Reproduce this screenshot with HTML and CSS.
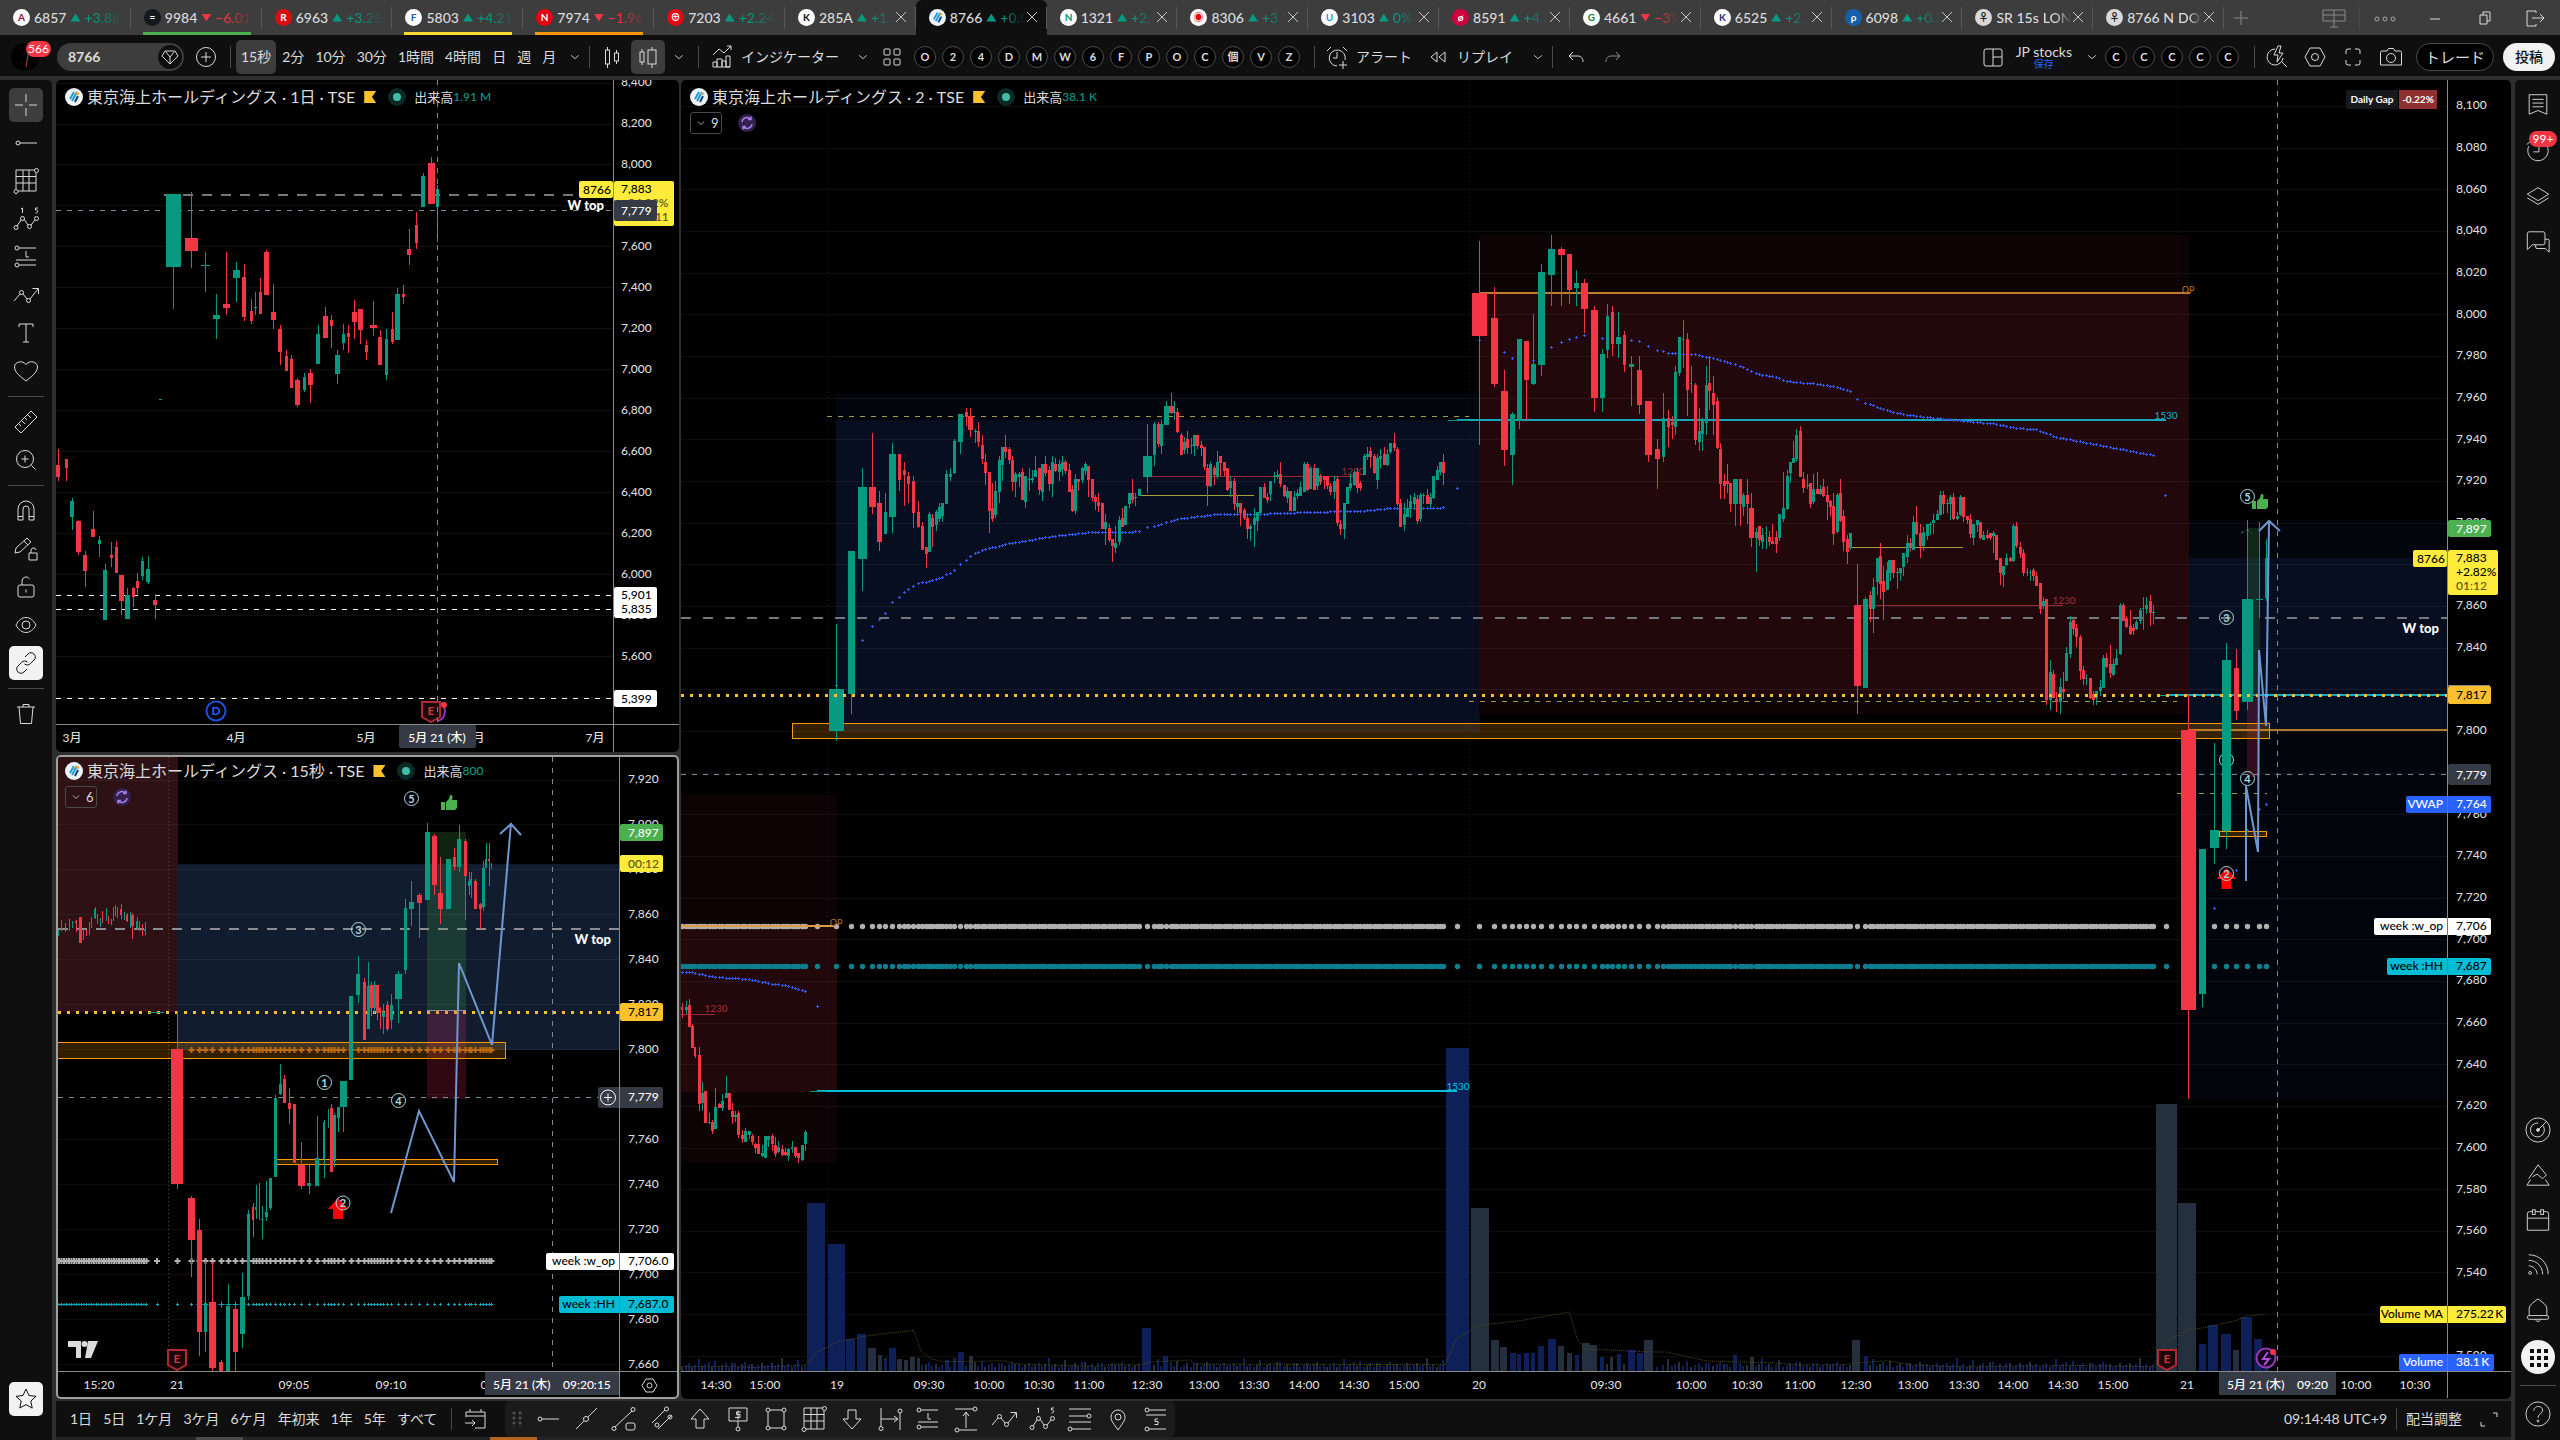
FILE: index.html
```html
<!DOCTYPE html>
<html lang="ja">
<head>
<meta charset="utf-8">
<title>8766 東京海上ホールディングス</title>
<link rel="stylesheet" href="styles.css">
</head>
<body>
<svg class="defs" aria-hidden="true">
  <symbol id="chev" viewBox="0 0 28 28"><path d="M9.500 12l4.500 4 4.500-4"/></symbol>
  <symbol id="cross" viewBox="0 0 28 28"><path d="M14 3v8M14 17v8M3 14h8M17 14h8"/></symbol>
  <symbol id="hline" viewBox="0 0 28 28"><circle cx="6" cy="14" r="2"/><path d="M8 14h17"/></symbol>
  <symbol id="fibgrid" viewBox="0 0 28 28"><path d="M4 3h19M4 3v19M4 9.500h20M4 16h20M6 24h18V6M11 3v21M17 3v21"/><circle cx="24.500" cy="3.500" r="2"/><circle cx="4" cy="24.500" r="2"/></symbol>
  <symbol id="wave" viewBox="0 0 28 28"><path d="M5 21l4-6M12 14l4 6M19 20l4-5"/><circle cx="4" cy="22.500" r="2"/><circle cx="10.500" cy="13.500" r="2"/><circle cx="17.500" cy="21.500" r="2"/><circle cx="24.500" cy="13.500" r="2"/><path d="M9 4l1.500-1v5M26 3h-2.500v2c3-.5 3 3 0 3"/></symbol>
  <symbol id="longpos" viewBox="0 0 28 28"><path d="M7 5h17M4 17h20M7 22h17M14 8v6h3"/><circle cx="5" cy="5" r="2"/><circle cx="5" cy="22" r="2"/></symbol>
  <symbol id="shortpos" viewBox="0 0 28 28"><path d="M7 5h17M4 10h20M7 24h17M16 14h-3v2.500h3v3h-3.500"/><circle cx="5" cy="5" r="2"/><circle cx="5" cy="24" r="2"/></symbol>
  <symbol id="trend" viewBox="0 0 28 28"><path d="M2 20l6-7M11 13l4 5M18 18l8-10M20.500 7.500H26.500V13"/><circle cx="9.500" cy="11.500" r="2"/><circle cx="16.500" cy="19.500" r="2"/></symbol>
  <symbol id="txt" viewBox="0 0 28 28"><path d="M7 8V5h14v3M14 5v18M11 23h6"/></symbol>
  <symbol id="heart" viewBox="0 0 28 28"><path d="M14 24C9 20 2.500 15.500 2.500 10c0-5 7.500-7.500 11.500-2.500C18 2.500 25.500 5 25.500 10c0 5.500-6.500 10-11.500 14z"/></symbol>
  <symbol id="ruler" viewBox="0 0 28 28"><path d="M3 19L19 3l6 6L9 25zM7 16l2 2M10 13l3 3M13 10l2 2M16 7l3 3"/></symbol>
  <symbol id="zoomin" viewBox="0 0 28 28"><circle cx="13" cy="13" r="8.500"/><path d="M19.500 19.500l4 4M13 9.500v7M9.500 13h7"/></symbol>
  <symbol id="magnet" viewBox="0 0 28 28"><path d="M6 23V12a8 8 0 0116 0v11h-5V12a3 3 0 00-6 0v11zM6 19.500h5M17 19.500h5"/></symbol>
  <symbol id="penlock" viewBox="0 0 28 28"><path d="M3 18l1-5L15 3l4 4L8 17zM12 6l4 4M17 18h8v7h-8zM19 18v-2a2.500 2.500 0 015-1"/></symbol>
  <symbol id="lock" viewBox="0 0 28 28"><rect x="6" y="12" width="16" height="12" rx="2"/><path d="M10 12V8a4 4 0 017.500-2M14 16.500v3"/></symbol>
  <symbol id="eye" viewBox="0 0 28 28"><path d="M4 14c5-10 15-10 20 0-5 10-15 10-20 0z"/><circle cx="14" cy="14" r="4"/></symbol>
  <symbol id="link" viewBox="0 0 28 28"><path d="M13 8l3-3c4-4 10 2 6 6l-3.500 3.500c-2 2-4 1.800-6 .5M15 20l-3 3c-4 4-10-2-6-6l3.500-3.500c2-2 4-1.800 6-.5"/></symbol>
  <symbol id="trash" viewBox="0 0 28 28"><path d="M5 7h18M11 7V4.500h6V7M7 7l1.500 16.500h11L21 7"/></symbol>
  <symbol id="star" viewBox="0 0 28 28"><path d="M14 4l3 6.500 7 .8-5.200 4.800 1.400 7L14 19.600 7.800 23l1.400-7L4 11.300l7-.8z"/></symbol>
  <symbol id="line2" viewBox="0 0 28 28"><path d="M4 24l8-8M16 12l9-9"/><circle cx="14" cy="14" r="2.500"/></symbol>
  <symbol id="rayrect" viewBox="0 0 28 28"><path d="M5 22L22 6"/><circle cx="4" cy="23.500" r="2"/><circle cx="23" cy="4.500" r="2"/><rect x="16" y="18" width="9" height="7" rx="2"/></symbol>
  <symbol id="channel" viewBox="0 0 28 28"><path d="M4 18L17 5M10 24L24 10"/><circle cx="18.500" cy="4" r="2"/><circle cx="9" cy="20" r="2"/><circle cx="22" cy="12" r="2"/></symbol>
  <symbol id="up" viewBox="0 0 28 28"><path d="M14 4l9 10h-5v9h-8v-9H5z"/></symbol>
  <symbol id="down" viewBox="0 0 28 28"><path d="M14 24l9-10h-5V5h-8v9H5z"/></symbol>
  <symbol id="pricenote" viewBox="0 0 28 28"><path d="M5 3h18v13H5zM14 16v6M17 7h-4.500v2.500H16v3h-5M14 5.500v9"/><circle cx="14" cy="24" r="2"/></symbol>
  <symbol id="rect" viewBox="0 0 28 28"><path d="M8 5h12M8 23h12M6 7v14M22 7v14"/><circle cx="6" cy="5" r="2"/><circle cx="22" cy="5" r="2"/><circle cx="6" cy="23" r="2"/><circle cx="22" cy="23" r="2"/></symbol>
  <symbol id="hrange" viewBox="0 0 28 28"><path d="M5 3v19M24 8v17M5 14h17M18 11l4 3-4 3"/><circle cx="5" cy="23.500" r="2"/><circle cx="24" cy="6" r="2"/></symbol>
  <symbol id="vrange" viewBox="0 0 28 28"><path d="M3 4h18M7 25h18M14 23V8M11 11l3-4 3 4"/><circle cx="23" cy="4" r="2"/><circle cx="5" cy="25" r="2"/></symbol>
  <symbol id="retr" viewBox="0 0 28 28"><path d="M3 4h22M3 11h18M3 17h22M6 24h19"/><circle cx="23" cy="11" r="2"/><circle cx="4" cy="24" r="2"/></symbol>
  <symbol id="pin" viewBox="0 0 28 28"><path d="M14 25c-4-6-7-9-7-13a7 7 0 0114 0c0 4-3 7-7 13z"/><circle cx="14" cy="12" r="3"/></symbol>
  <symbol id="candles" viewBox="0 0 28 28"><path d="M9.500 4v3M9.500 21v4M18.500 7v3M18.500 18v3"/><rect x="7.500" y="7" width="4" height="14"/><rect x="16.500" y="10" width="4" height="8"/></symbol>
  <symbol id="volcandles" viewBox="0 0 28 28"><path d="M8 6v3M8 19v3M18 4v3M18 21v4"/><rect x="6" y="9" width="4" height="10"/><rect x="14" y="7" width="8" height="14"/></symbol>
  <symbol id="indic" viewBox="0 0 28 28"><path d="M5 12l6-6 5 4 7-7M19 3h4v4M5 24v-5h4v5M9 24v-8h5v8M14 24v-6h4v6M18 24V13h4v11zM5 24h17"/></symbol>
  <symbol id="grid4" viewBox="0 0 28 28"><rect x="6" y="6" width="6" height="6" rx="1"/><rect x="16" y="6" width="6" height="6" rx="1"/><rect x="6" y="16" width="6" height="6" rx="1"/><rect x="16" y="16" width="6" height="6" rx="1"/></symbol>
  <symbol id="alarm" viewBox="0 0 28 28"><path d="M22 17a8 8 0 10-8 6M14 9v6h-4M4 8l4-4M20 4l4 4M20 18v8M16 22h8"/></symbol>
  <symbol id="replay" viewBox="0 0 28 28"><path d="M13 9v10l-6-5zM21 9v10l-6-5z"/></symbol>
  <symbol id="undo" viewBox="0 0 28 28"><path d="M11 9l-4 4 4 4M7 13h9c3 0 5 2 5 6"/></symbol>
  <symbol id="redo" viewBox="0 0 28 28"><path d="M17 9l4 4-4 4M21 13h-9c-3 0-5 2-5 6"/></symbol>
  <symbol id="layout" viewBox="0 0 28 28"><rect x="4" y="6" width="18" height="17" rx="2"/><path d="M13 6v17M13 14h9"/></symbol>
  <symbol id="bolt" viewBox="0 0 28 28"><path d="M12 6a8 8 0 108 9M19 19l5 5M15 3l-4 9h4l-1 7 6-9h-4l2-7z"/></symbol>
  <symbol id="hex" viewBox="0 0 28 28"><path d="M9 5h10l5 9-5 9H9l-5-9z"/><circle cx="14" cy="14" r="3.500"/></symbol>
  <symbol id="expand" viewBox="0 0 28 28"><path d="M7 11V8a2 2 0 012-2h3M16 6h3a2 2 0 012 2v3M21 17v3a2 2 0 01-2 2h-3M12 22H9a2 2 0 01-2-2v-3"/></symbol>
  <symbol id="camera" viewBox="0 0 28 28"><path d="M5 8h5l1.500-2.500h5L18 8h5a1.500 1.500 0 011.500 1.500V22H3.500V9.500A1.500 1.500 0 015 8z"/><circle cx="14" cy="15" r="4.500"/></symbol>
  <symbol id="gem" viewBox="0 0 28 28"><circle cx="14" cy="14" r="12" fill="#0f0f0f" stroke="none"/><path d="M9 8h10l3 5-8 8-8-8zM14 21v-7M10 9l4 5 4-5"/></symbol>
  <symbol id="plusc" viewBox="0 0 28 28"><circle cx="14" cy="14" r="9.500"/><path d="M14 9v10M9 14h10"/></symbol>
  <symbol id="calgo" viewBox="0 0 28 28"><path d="M5 12V7h19v16H14M5 11h19M9 4v3M20 4v3M4 18h10M11 15l3 3-3 3"/></symbol>
  <symbol id="corner" viewBox="0 0 28 28"><path d="M18 8h4v4M10 21H6v-4"/></symbol>
  <symbol id="list" viewBox="0 0 28 28"><path d="M4.500 4h19v21L14 21l-9.500 4zM8 9h12M8 13h12M8 17h12"/></symbol>
  <symbol id="clock" viewBox="0 0 28 28"><path d="M4 10a11 11 0 1020 0M15 9v7h-6M2 8l5-4"/></symbol>
  <symbol id="layers" viewBox="0 0 28 28"><path d="M2.500 12L14 5l11.500 7L14 19zM2.500 16L14 23l11.500-7"/></symbol>
  <symbol id="chat" viewBox="0 0 28 28"><path d="M2.500 5a2 2 0 012-2h15a2 2 0 012 2v10a2 2 0 01-2 2H8l-5.500 5zM21.500 11h3a1.500 1.500 0 011.500 1.500V25l-4-4H13a1.500 1.500 0 01-1.500-1.500V17"/></symbol>
  <symbol id="target" viewBox="0 0 28 28"><circle cx="14" cy="14" r="13"/><path d="M19 9a7.500 7.500 0 11-5-2.500M14 14l9-9"/><circle cx="14" cy="14" r="1.500" fill="#dbdbdb"/></symbol>
  <symbol id="idea" viewBox="0 0 28 28"><path d="M4 18L14 3l9 11-4 4-6-5-5 3M6 19l-4 6h24l-4-6"/></symbol>
  <symbol id="cal" viewBox="0 0 28 28"><path d="M5 5h3M11 5h6M20 5h3a2.500 2.500 0 012.500 2.500V25h-23V7.500A2.500 2.500 0 015 5M2.500 12h23"/><rect x="8" y="3" width="3" height="5"/><rect x="17" y="3" width="3" height="5"/></symbol>
  <symbol id="rss" viewBox="0 0 28 28"><path d="M4 3c12 0 21 9 21 21M4 9c9 0 15 7 15 15M4 15c5 0 9 4 9 9"/><circle cx="5.500" cy="22.500" r="1.500"/></symbol>
  <symbol id="bell" viewBox="0 0 28 28"><path d="M4.500 20V12C5 8 9 6 12 3.500 13 2 15 2 16 3.500 19 6 23 8 23.500 12v8M11 24c1 3 5 3 6 0"/><rect x="2.500" y="20" width="23" height="4" rx="2"/></symbol>
  <symbol id="help" viewBox="0 0 28 28"><circle cx="14" cy="14" r="13"/><path d="M9.500 10.500c0-6 9.500-6 9.500-.5 0 3.500-5 4-5 8"/><circle cx="14" cy="21.500" r="1"/></symbol>
  <symbol id="tokio" viewBox="0 0 18 18"><circle cx="9" cy="9" r="9" fill="#eef3fa" stroke="none"/><path d="M5 11l4-7M7 13l5-9" stroke="#1d9bd8" stroke-width="2"/><path d="M10 14l3-6" stroke="#123f7d" stroke-width="2"/><path d="M11 5l3 1" stroke="#f3a21b" stroke-width="2"/></symbol>
  <symbol id="sync" viewBox="0 0 20 20"><circle cx="10" cy="10" r="9" fill="#33214f" stroke="none"/><path d="M5 9a5 5 0 019-2.500M15 11a5 5 0 01-9 2.500M14 3.500v3h-3M6 16.500v-3h3" stroke="#a77be8" stroke-width="1.500"/></symbol>
</svg>

<header class="tabs">
  <nav class="tablist" id="tabs"></nav>
  <div class="win">
    <button class="ib" aria-label="追加"><svg class="ic dim"><path d="M14 7v14M7 14h14"/></svg></button>
    <span class="grow"></span>
    <button class="ib wide" aria-label="表示"><svg class="ic dim"><path d="M3 6h22v11H3zM14 6v17M10 23h8M3 11h22"/></svg></button>
    <span class="vs"></span>
    <button class="ib wide" aria-label="メニュー"><svg class="ic more"><circle cx="6" cy="15" r="2"/><circle cx="14" cy="15" r="2"/><circle cx="22" cy="15" r="2"/></svg></button>
    <button class="ib wide" aria-label="最小化"><svg class="ic"><path d="M9 15h10"/></svg></button>
    <button class="ib wide" aria-label="元に戻す"><svg class="ic"><path d="M9 11h7v9H9zM12 11V8h7v9h-3"/></svg></button>
    <button class="ib wide" aria-label="閉じる"><svg class="ic"><path d="M15 9V7H6v15h9v-2M11 14h12M19 10l4 4-4 4"/></svg></button>
  </div>
</header>

<div class="topbar">
  <div class="g g-user">
    <button class="avatar" aria-label="ユーザー"><svg viewBox="0 0 28 28"><path d="M15 24l3-18" stroke="#b5442c"/></svg><span class="badge">566</span></button>
    <label class="search"><input value="8766" aria-label="シンボル"><svg class="ic"><use href="#gem"/></svg></label>
    <button class="ib" aria-label="比較"><svg class="ic"><use href="#plusc"/></svg></button>
  </div>
  <span class="vs"></span>
  <div class="g g-tf">
    <button class="tb on">15秒</button><button class="tb">2分</button><button class="tb">10分</button><button class="tb">30分</button><button class="tb">1時間</button><button class="tb">4時間</button><button class="tb">日</button><button class="tb">週</button><button class="tb">月</button>
    <span class="grow"></span><button class="cv" aria-label="時間足"><svg class="ic"><use href="#chev"/></svg></button>
  </div>
  <span class="vs"></span>
  <div class="g g-style">
    <button class="ib" aria-label="ローソク足"><svg class="ic"><use href="#candles"/></svg></button>
    <button class="ib on" aria-label="出来高ローソク足"><svg class="ic"><use href="#volcandles"/></svg></button>
    <button class="cv" aria-label="チャートの種類"><svg class="ic"><use href="#chev"/></svg></button>
  </div>
  <span class="vs"></span>
  <div class="g g-ind">
    <svg class="ic"><use href="#indic"/></svg><button class="tb">インジケーター</button>
    <span class="grow"></span><button class="cv" aria-label="お気に入り"><svg class="ic"><use href="#chev"/></svg></button>
    <button class="ib" aria-label="テンプレート"><svg class="ic"><use href="#grid4"/></svg></button>
  </div>
  <div class="g rounds"><button>O</button><button>2</button><button>4</button><button>D</button><button>M</button><button>W</button><button>6</button><button>F</button><button>P</button><button>O</button><button>C</button><button>個</button><button>V</button><button>Z</button></div>
  <span class="vs"></span>
  <div class="g g-alert">
    <svg class="ic"><use href="#alarm"/></svg><button class="tb">アラート</button>
    <span class="grow"></span>
    <svg class="ic"><use href="#replay"/></svg><button class="tb">リプレイ</button>
    <button class="cv" aria-label="リプレイ設定"><svg class="ic"><use href="#chev"/></svg></button>
  </div>
  <span class="vs"></span>
  <div class="g g-undo">
    <button class="ib" aria-label="元に戻す"><svg class="ic"><use href="#undo"/></svg></button>
    <button class="ib" aria-label="やり直す"><svg class="ic dim"><use href="#redo"/></svg></button>
  </div>
  <span class="grow"></span>
  <div class="g g-layout">
    <button class="ib" aria-label="レイアウト"><svg class="ic"><use href="#layout"/></svg></button>
    <button class="name"><span>JP stocks</span><small>保存</small></button>
    <button class="cv" aria-label="レイアウト管理"><svg class="ic"><use href="#chev"/></svg></button>
  </div>
  <div class="g rounds"><button>C</button><button>C</button><button>C</button><button>C</button><button>C</button></div>
  <span class="vs"></span>
  <div class="g g-tools">
    <button class="ib" aria-label="クイック検索"><svg class="ic"><use href="#bolt"/></svg></button>
    <button class="ib" aria-label="設定"><svg class="ic"><use href="#hex"/></svg></button>
    <button class="ib" aria-label="全画面"><svg class="ic"><use href="#expand"/></svg></button>
    <button class="ib" aria-label="スナップショット"><svg class="ic"><use href="#camera"/></svg></button>
  </div>
  <button class="pill">トレード</button>
  <button class="pill white">投稿</button>
</div>

<div class="work">
  <nav class="side left" id="left"></nav>
  <div class="center">
    <main class="charts">
      <div class="col">
        <section class="panel pa">
          <svg class="plot" id="day" viewBox="56 80 623 672" preserveAspectRatio="none"></svg>
          <div class="legend"><svg class="logo"><use href="#tokio"/></svg><h2>東京海上ホールディングス · 1日 · TSE</h2><i class="flag"></i><i class="live"></i><span>出来高</span><b>1.91 M</b></div>
        </section>
        <section class="panel pb">
          <svg class="plot" id="sec" viewBox="58 757 619 640" preserveAspectRatio="none"></svg>
          <div class="legend"><svg class="logo"><use href="#tokio"/></svg><h2>東京海上ホールディングス · 15秒 · TSE</h2><i class="flag"></i><i class="live"></i><span>出来高</span><b>800</b></div>
          <div class="legend row2"><button class="count"><svg class="ic"><use href="#chev"/></svg>6</button><svg class="sync"><use href="#sync"/></svg></div>
        </section>
      </div>
      <section class="panel pm">
        <svg class="plot" id="min" viewBox="681 80 1830 1319" preserveAspectRatio="none"></svg>
        <div class="legend"><svg class="logo"><use href="#tokio"/></svg><h2>東京海上ホールディングス · 2 · TSE</h2><i class="flag"></i><i class="live"></i><span>出来高</span><b>38.1 K</b></div>
        <div class="legend row2"><button class="count"><svg class="ic"><use href="#chev"/></svg>9</button><svg class="sync"><use href="#sync"/></svg></div>
      </section>
    </main>
    <footer class="bottom">
      <div class="ranges"><button>1日</button><button>5日</button><button>1ケ月</button><button>3ケ月</button><button>6ケ月</button><button>年初来</button><button>1年</button><button>5年</button><button>すべて</button></div>
      <span class="vs"></span>
      <button class="ib cal" aria-label="日付へ移動"><svg class="ic"><use href="#calgo"/></svg></button>
      <div class="fav" id="fav"></div>
      <span class="grow"></span>
      <button class="tb">09:14:48 UTC+9</button><span class="vs"></span><button class="tb adj">配当調整</button>
      <button class="ib" aria-label="最大化"><svg class="ic"><use href="#corner"/></svg></button>
    </footer>
    <div class="edge"><i></i><i class="or"></i></div>
  </div>
  <nav class="side right">
    <div class="stack">
      <button aria-label="ウォッチリスト"><svg class="ic"><use href="#list"/></svg></button>
      <button aria-label="アラート"><svg class="ic"><use href="#clock"/></svg><span class="badge">99+</span></button>
      <button aria-label="オブジェクト"><svg class="ic"><use href="#layers"/></svg></button>
      <button aria-label="チャット"><svg class="ic"><use href="#chat"/></svg></button>
    </div>
    <span class="grow"></span>
    <button aria-label="スクリーナー"><svg class="ic"><use href="#target"/></svg></button>
    <button aria-label="アイデア"><svg class="ic"><use href="#idea"/></svg></button>
    <button aria-label="カレンダー"><svg class="ic"><use href="#cal"/></svg></button>
    <button aria-label="ニュース"><svg class="ic"><use href="#rss"/></svg></button>
    <button aria-label="通知"><svg class="ic"><use href="#bell"/></svg></button>
    <button class="apps" aria-label="プロダクト"><svg class="ic"><path d="M5 5h4v4H5zM12 5h4v4h-4zM19 5h4v4h-4zM5 12h4v4H5zM12 12h4v4h-4zM19 12h4v4h-4zM5 19h4v4H5zM12 19h4v4h-4zM19 19h4v4h-4z"/></svg></button>
    <hr>
    <button aria-label="ヘルプ"><svg class="ic"><use href="#help"/></svg></button>
  </nav>
</div>
<script src="app.js"></script>
</body>
</html>
```

FILE: styles.css
```css
* { box-sizing: border-box; }
body {
  margin: 0;
  height: 100vh;
  display: flex;
  flex-direction: column;
  background: #2e2e2e;
  color: #dbdbdb;
  font: 14px/18px Lato, "Noto Sans CJK JP", sans-serif;
  overflow: hidden;
}
button { background: none; border: 0; padding: 0; color: inherit; font: inherit; white-space: nowrap; }
.defs { position: absolute; width: 0; height: 0; }
.ic { width: 28px; height: 28px; flex: none; display: block; fill: none; stroke: #dbdbdb; stroke-width: 1; }
.ic.dim { stroke: #8a8a8a; }
.ic.more { stroke: #a8a8a8; }
.grow { flex: 1; }
.vs { width: 1px; height: 22px; background: #4a4a4a; flex: none; }

.tabs { height: 35px; flex: none; display: flex; background: #3d3d3d; }
.tablist { flex: 1; display: flex; min-width: 0; }
.tab {
  flex: 1; min-width: 0; height: 35px; position: relative;
  display: flex; align-items: center; padding: 0 0 0 13px; gap: 4px;
  color: inherit; text-decoration: none; font-weight: 500; white-space: nowrap;
}
.tab::after { content: ""; position: absolute; right: 0; top: 7px; height: 22px; width: 1px; background: #575757; }
.tab.active { background: #0f0f0f; border-radius: 6px 6px 0 0; }
.tab .lg { width: 17px; height: 17px; flex: none; }
.tab .lg text { font-size: 10px; font-weight: 700; text-anchor: middle; }
.tab .nm { flex: none; font-size: 14px; }
.tab .rest { flex: 1; overflow: hidden; display: flex; gap: 4px; align-items: center; margin-right: 22px;
  -webkit-mask-image: linear-gradient(90deg, #000 45%, transparent 100%); mask-image: linear-gradient(90deg, #000 45%, transparent 100%); }
.tab.nox .rest { margin-right: 8px; }
.tab .up { color: #089981; }
.tab .dn { color: #f23645; }
.tri { width: 10px; height: 8px; flex: none; background: #089981; clip-path: polygon(50% 0, 100% 100%, 0 100%); }
.tri.d { background: #f23645; clip-path: polygon(0 0, 100% 0, 50% 100%); }
.tab .x { position: absolute; right: 8px; top: 10px; width: 14px; height: 14px; stroke: #c8c8c8; fill: none; }
.tab .bar { position: absolute; left: 12px; right: 11px; bottom: 0; height: 3px; }
.win { width: 336px; display: flex; align-items: center; }
.win .ib.wide { width: 50px; }

.ib { width: 34px; height: 34px; flex: none; display: grid; place-items: center; border-radius: 5px; }
.ib.on, .tb.on { background: #3d3d3d; }
.tb { height: 34px; padding: 0 5px; border-radius: 5px; }
.cv { width: 20px; height: 34px; display: grid; place-items: center; }
.cv .ic { width: 24px; height: 24px; }
.topbar { height: 41px; flex: none; display: flex; align-items: center; background: #0f0f0f; padding: 2px 5px 0 11px; }
.g { display: flex; align-items: center; }
.badge { position: absolute; background: #f23645; color: #fff; font-size: 12px; line-height: 16px; border-radius: 8px; padding: 0 4px; }
.avatar { position: relative; width: 28px; height: 28px; border-radius: 50%; background: #000; }
.avatar svg { fill: none; display: block; }
.avatar .badge { left: 15px; top: -2px; padding: 0 2px; }
.g-user { width: 219px; }
.search { margin-left: 18px; width: 127px; height: 28px; border-radius: 14px; background: #3d3d3d; display: flex; align-items: center; }
.search input { flex: 1; min-width: 0; background: none; border: 0; color: #dbdbdb; font: bold 14px Lato, sans-serif; padding: 0 0 0 11px; outline: 0; }
.search + .ib { margin-left: 5px; }
.g-tf { width: 358px; padding: 0 6px 0 5px; gap: 1px; }
.g-style { width: 108px; padding: 0 5px; gap: 2px; }
.g-ind { width: 210px; padding: 0 0 0 9px; }
.g-ind .ib { margin-left: 4px; }
.rounds { gap: 6px; }
.rounds button { width: 22px; height: 22px; border: 1px solid #4a4a4a; border-radius: 50%; background: #000; font-size: 11px; line-height: 11px; font-weight: 700; }
.g-ind + .rounds { margin: 0 14px 0 5px; }
.g-alert { width: 237px; padding: 0 6px 0 8px; }
.g-alert .cv { margin-left: 8px; }
.g-undo { padding: 0 6px; gap: 3px; }
.name { display: flex; flex-direction: column; align-items: center; line-height: 14px; padding: 0 8px 0 5px; }
.name small { color: #2962ff; font-size: 10px; line-height: 10px; }
.g-layout + .rounds { margin: 0 15px 0 5px; }
.g-tools { gap: 4px; padding: 0 5px; }
.pill { height: 28px; width: 78px; border: 1px solid #4a4a4a; border-radius: 14px; background: #000; font-size: 15px; margin-left: 3px; }
.pill.white { width: 52px; background: #f2f2f2; color: #0f0f0f; border: 0; margin-left: 9px; font-size: 14px; font-weight: 500; }

.work { flex: 1; min-height: 0; margin-top: 4px; display: flex; gap: 4px; }
.side { background: #0f0f0f; display: flex; flex-direction: column; align-items: center; }
.side button { position: relative; width: 34px; height: 34px; flex: none; display: grid; place-items: center; border-radius: 5px; }
.side hr { width: 36px; border: 0; border-top: 1px solid #4a4a4a; margin: 4px 0; }
.side.left { width: 52px; padding: 8px 0 24px; gap: 4px; border-radius: 0 5px 0 0; }
.side .sel { background: #3d3d3d; }
.side .inv { background: #f2f2f2; }
.side .inv .ic { stroke: #0f0f0f; }
.side.right { width: 45px; padding: 7px 0 9px; gap: 11px; border-radius: 5px 0 0 0; }
.stack { display: flex; flex-direction: column; gap: 12px; }
.side.right .ic { width: 26px; height: 26px; }
.side.right .badge { left: 8px; top: -2px; }
.side.right .apps { background: #f2f2f2; border-radius: 50%; margin-top: 2px; }
.side.right .apps .ic { fill: #0f0f0f; stroke: none; }
.side.right hr { margin: 0; }

.center { flex: 1; min-width: 0; display: flex; flex-direction: column; }
.charts { flex: 1; min-height: 0; display: grid; grid-template-columns: 623fr 1830fr; gap: 2px; }
.col { display: grid; grid-template-rows: 672fr 644fr; gap: 3px; min-height: 0; min-width: 0; }
.panel { position: relative; background: #000; overflow: hidden; border-radius: 5px; min-width: 0; min-height: 0; }
.pb { border: 2px solid #a0a0a0; }
.plot { width: 100%; height: 100%; display: block; font: 500 12px Lato, "Noto Sans CJK JP", sans-serif; }
.legend { position: absolute; left: 9px; top: 6px; display: flex; align-items: center; height: 22px; white-space: nowrap; }
.legend.row2 { top: 32px; gap: 15px; }
.pb .legend { left: 7px; top: 3px; }
.pb .legend.row2 { top: 29px; }
.logo { width: 18px; height: 18px; margin-right: 4px; fill: none; }
.legend h2 { margin: 0; font-size: 16px; line-height: 22px; font-weight: 400; }
.flag { width: 12px; height: 12px; margin: 0 12px 0 9px; background: #fbc02d; clip-path: polygon(0 0, 100% 0, 65% 50%, 100% 100%, 0 100%); }
.live { width: 18px; height: 18px; border-radius: 50%; background: #42bda8; border: 5px solid #0b2a26; margin-right: 8px; }
.legend span { font-size: 13px; }
.legend b { font-size: 12px; font-weight: 500; color: #089981; }
.count { height: 22px; width: 32px; border: 1px solid #4a4a4a; border-radius: 3px; display: flex; align-items: center; font-size: 13px; }
.count .ic { width: 20px; height: 20px; }
.sync { width: 20px; height: 20px; fill: none; }

.bottom { height: 38px; flex: none; display: flex; align-items: center; background: #0f0f0f; border-top: 2px solid #2e2e2e; padding: 0 5px 0 14px; }
.ranges { display: flex; gap: 11px; width: 377px; }
.cal { margin: 0 13px 0 2px; }
.fav { display: flex; align-self: stretch; align-items: center; gap: 4px; background: #1b1b1b; border-radius: 5px; padding: 0 2px 0 7px; }
.fav .dots { width: 12px; height: 16px; margin-right: 3px; background: radial-gradient(circle at 2px 2px, #4f4f4f 1px, transparent 2px) 0 0 / 6px 5px; }
.bottom .vs { margin: 0 4px; }
.bottom .adj { margin-right: 5px; }
.edge { height: 3px; flex: none; background: #232323; display: flex; padding-left: 140px; gap: 247px; }
.edge i { width: 47px; background: #4a4a4a; }
.edge .or { background: #b5651d; }
```

FILE: app.js
```js
const NS = 'http://www.w3.org/2000/svg';
const UP = '#089981', DOWN = '#f23645';

/* ---------- tabs and tool strips ---------- */
const tabs = [
  ['6857', '+3.88', '#fff', '#8b1049', 'A', ''], ['9984', '-6.01', '#15181d', '#fff', '=', '#4caf50'],
  ['6963', '+3.25', '#d90f0f', '#fff', 'R', ''], ['5803', '+4.21', '#fff', '#1a5fc2', 'F', '#fdd835'],
  ['7974', '-1.96', '#e60012', '#fff', 'N', '#ff9800'], ['7203', '+2.24', '#e50914', '#fff', '⊕', ''],
  ['285A', '+1.88', '#fff', '#111', 'K', '', 1], ['8766', '+0.88', '', '', '', '', 1],
  ['1321', '+2.55', '#fff', '#0f8f72', 'N', '', 1], ['8306', '+3.21', '#fff', '#e60000', '◉', '', 1],
  ['3103', '0%', '#fff', '#16a0dc', 'U', '', 1], ['8591', '+4.62', '#d0003f', '#fff', 'ø', '', 1],
  ['4661', '-3%', '#fff', '#12813f', 'G', '', 1], ['6525', '+2.77', '#fff', '#23327d', 'K', '', 1],
  ['6098', '+0.88', '#1560a8', '#fff', 'ρ', '', 1],
  ['SR 15s', 'LONG', '#d8d8d8', '#222', '♀', '', 1], ['8766 N', 'DOW', '#d8d8d8', '#222', '♀', '', 1]
];
document.getElementById('tabs').innerHTML = tabs.map(([n, p, bg, fg, ch, bar, x]) => {
  const num = /[%+-]|^\d/.test(p), neg = p[0] === '-';
  const lg = ch ? `<svg class="lg" viewBox="0 0 17 17"><circle cx="8.5" cy="8.5" r="8.5" fill="${bg}"/><text x="8.5" y="12" fill="${fg}">${ch}</text></svg>`
    : '<svg class="lg" fill="none"><use href="#tokio"/></svg>';
  const rest = num ? `<i class="tri${neg ? ' d' : ''}"></i><span class="${neg ? 'dn' : 'up'}">${p.replace('-', '−')}</span>` : `<span>${p}</span>`;
  return `<a href="#" class="tab${x ? '' : ' nox'}${ch ? '' : ' active'}">${lg}<span class="nm">${n}</span><span class="rest">${rest}</span>` +
    (x ? '<svg class="x"><path d="M2 2l10 10M12 2L2 12"/></svg>' : '') +
    (bar ? `<i class="bar" style="background:${bar}"></i>` : '') + '</a>';
}).join('');

const btn = (id, cls, label) => `<button class="${cls}" aria-label="${label || id}"><svg class="ic"><use href="#${id}"/></svg></button>`;
document.getElementById('left').innerHTML =
  btn('cross', 'sel') + ['hline', 'fibgrid', 'wave', 'longpos', 'trend', 'txt', 'heart'].map(i => btn(i, '')).join('') + '<hr>' +
  ['ruler', 'zoomin'].map(i => btn(i, '')).join('') + '<hr>' +
  ['magnet', 'penlock', 'lock', 'eye'].map(i => btn(i, '')).join('') + btn('link', 'inv') + '<hr>' +
  btn('trash', '') + '<span class="grow"></span>' + btn('star', 'inv');
document.getElementById('fav').innerHTML = '<i class="dots"></i>' +
  ['hline', 'line2', 'rayrect', 'channel', 'up', 'pricenote', 'rect', 'fibgrid', 'down', 'hrange', 'longpos', 'vrange', 'trend', 'wave', 'retr', 'pin', 'shortpos']
    .map(i => btn(i, 'ib')).join('');

/* ---------- drawing helpers ---------- */
function canvas(id) {
  const root = document.getElementById(id);
  const add = (tag, a, txt) => {
    const e = document.createElementNS(NS, tag);
    for (const k in a) e.setAttribute(k, a[k]);
    if (txt !== undefined) e.textContent = txt;
    root.appendChild(e);
    return e;
  };
  const c = {
    rect: (x1, y1, x2, y2, fill, o = {}) => add('rect', { x: x1, y: y1, width: x2 - x1, height: y2 - y1, fill, ...o }),
    h: (y, x1, x2, stroke, w = 1, dash = '', o = {}) => add('path', { d: `M${x1} ${Math.floor(y) + (w % 2 ? .5 : 0)}H${x2}`, stroke, 'stroke-width': w, 'stroke-dasharray': dash, fill: 'none', ...o }),
    v: (x, y1, y2, stroke, w = 1, dash = '') => add('path', { d: `M${Math.floor(x) + .5} ${y1}V${y2}`, stroke, 'stroke-width': w, 'stroke-dasharray': dash, fill: 'none' }),
    path: (d, stroke, w = 1, o = {}) => add('path', { d, stroke, 'stroke-width': w, fill: 'none', ...o }),
    poly: (points, fill) => add('polygon', { points, fill }),
    dot: (cx, cy, r, fill, o = {}) => add('circle', { cx, cy, r, fill, ...o }),
    text: (x, y, s, fill = '#dbdbdb', o = {}) => add('text', { x, y: y + 4, fill, ...o }, s),
    plus: (x, y, r, stroke, w = 1) => add('path', { d: `M${x - r} ${y}h${2 * r}M${x} ${y - r}v${2 * r}`, stroke, 'stroke-width': w }),
    mid: (x, y, s, fill, o = {}) => c.text(x, y, s, fill, { 'text-anchor': 'middle', ...o }),
    tag: (x1, y1, x2, y2, bg, tx, s, fg) => { c.rect(x1, y1, x2, y2, bg, { rx: 2 }); c.text(tx, (y1 + y2) / 2, s, fg); },
    num: (x, y, n) => { c.dot(x, y, 7, 'none', { stroke: '#a8dbe2' }); c.mid(x, y, n, '#a8dbe2', { 'font-weight': 700, 'font-size': 11 }); },
    thumb: (x, y) => { c.rect(x - 8, y - 1, x - 4, y + 7, '#4caf50'); c.path(`M${x - 3} ${y - 1}l3-3 1-4c3 0 3 2 2 5h5v8l-2 2h-9z`, 'none', 0, { fill: '#4caf50' }); },
    arrow: (x, y) => c.poly(`${x},${y} ${x + 10},${y + 11} ${x + 5},${y + 11} ${x + 5},${y + 21} ${x - 5},${y + 21} ${x - 5},${y + 11} ${x - 10},${y + 11}`, '#ff0000'),
    earn: (x, y) => { c.path(`M${x - 9} ${y - 9}h18v15l-9 5-9-5z`, '#b22833', 2, { fill: '#1c0709' }); c.mid(x, y, 'E', '#d13440', { 'font-weight': 700 }); }
  };
  return c;
}
/* series rows: dir x width high top bottom low */
function parse(s, ox, oy, kx, ky) {
  return s.trim().split(/\s*;\s*/).filter(Boolean).map(r => {
    const [d, x, w, hi, t, b, lo] = r.split(' ').map((v, i) => i ? +v : v);
    const Y = v => Math.round(oy + v / ky);
    return { d, x: Math.floor(ox + x / kx), w: Math.max(1, Math.round(w / kx)), hi: Y(hi), t: Y(t), b: Y(b), lo: Y(lo) };
  });
}
function candles(c, list, clip = 9999) {
  for (const k of list) {
    const col = k.d === 'g' ? UP : DOWN;
    c.rect(k.x, k.hi, k.x + 1, Math.min(clip, Math.max(k.lo, k.b)), col);
    const x = k.x - Math.floor(k.w / 2);
    c.rect(x, k.t, x + k.w, Math.min(clip, Math.max(k.b, k.t + 1)), col);
  }
}
const YEL = '#ffeb3b', CROSS = '#7d8899';
const price = n => n.toLocaleString('en-US');

/* ---------- daily ---------- */
{
  const c = canvas('day');
  const y = p => 124 + (8200 - p) * 0.2049;
  for (let p = 8400; p >= 5400; p -= 200) c.h(y(p), 56, 613, '#101010');
  c.h(195, 164, 613, '#777', 2, '10 9');
  c.h(210, 56, 613, CROSS, 1, '5 6');
  [595, 609, 698].forEach(v => c.h(v, 56, 613, '#fff', 1, '5 6'));
  candles(c, parse(`
r 134 10 851 888 915 925;r 151 6 874 874 895 925;g 164 10 964 971 1008 1038;r 178 11 1015 1018 1088 1095;r 194 10 1086 1095 1132 1169;
r 212 10 994 1035 1054 1054;g 226 6 1051 1061 1070 1101;g 239 10 1115 1130 1246 1246;r 253 7 1065 1095 1102 1123;r 264 7 1062 1078 1137 1137;
r 276 12 1141 1141 1201 1234;g 289 11 1171 1187 1243 1243;r 303 6 1168 1171 1192 1215;r 312 7 1136 1155 1171 1185;g 323 7 1101 1109 1144 1153;
g 337 10 1098 1128 1158 1162;r 353 10 1185 1199 1211 1243;g 364 7 736 736 738 738;g 394 34 264 264 431 528;r 435 30 258 364 394 434;
g 467 20 397 427 429 489;g 492 15 493 542 551 597;r 515 16 397 517 526 542;g 537 15 420 438 457 512;r 555 10 424 454 546 556;
r 571 6 505 533 556 563;g 581 6 489 523 526 542;r 592 6 457 490 540 540;r 605 11 393 397 496 496;r 621 11 470 535 553 574;
r 637 10 565 574 627 657;r 651 6 623 636 671 671;r 662 6 635 643 710 710;r 676 12 687 692 749 754;g 692 6 676 684 716 719;
r 705 11 666 676 703 745;g 723 10 565 586 655 655;r 739 11 523 544 595 595;r 753 6 542 553 567 618;g 767 11 623 634 678 701;
g 780 6 563 586 606 623;r 792 6 565 583 593 630;r 805 11 507 535 558 597;r 819 11 528 528 576 609;r 832 6 600 611 627 646;
r 849 16 510 565 572 590;r 864 10 576 593 657 657;g 878 6 574 597 680 692;r 892 6 535 574 604 609;g 903 11 480 493 600 600;
r 917 6 473 493 500 517;r 930 10 344 390 404 427;r 946 6 304 334 376 390;g 962 10 214 221 293 293;r 981 15 178 191 286 286;g 994 7 242 251 293 374`,
    0, 80, 2.2725, 2.306));
  c.dot(216, 711, 9.5, 'none', { stroke: '#1f50d8', 'stroke-width': 2 });
  c.mid(216, 711, 'D', '#2962ff', { 'font-weight': 700 });
  c.path('M438 702a10 10 0 010 19', '#8e3bb0', 2);
  c.earn(431, 711);
  c.dot(444, 705, 3, DOWN);
  c.v(437, 80, 722, CROSS, 1, '5 6');
  c.text(604, 206, 'W top', '#fff', { 'text-anchor': 'end', 'font-weight': 900, 'font-size': 13 });
  c.v(613, 80, 752, '#8a8a8a');
  c.h(724, 56, 679, '#8a8a8a');
  for (let p = 8400; p >= 5400; p -= 200) c.text(621, y(p) - 1, price(p));
  c.tag(579, 181, 613, 198, YEL, 583, '8766', '#000');
  c.rect(614, 181, 674, 226, YEL, { rx: 2 });
  c.text(621, 189, '7,883', '#000');
  c.text(621, 203, '+24.22%', '#5c5416');
  c.text(621, 217, '05:10:11', '#5c5416');
  c.tag(614, 200, 657, 221, '#363a45', 621, '7,779', '#fff');
  c.rect(614, 587, 657, 618, '#fff', { rx: 2 });
  c.text(621, 595, '5,901', '#000');
  c.text(621, 609, '5,835', '#000');
  c.tag(614, 690, 657, 707, '#fff', 621, '5,399', '#000');
  [[72, '3月'], [236, '4月'], [366, '5月'], [475, '6月'], [595, '7月']].forEach(([x, s]) => c.mid(x, 738, s));
  c.rect(399, 725, 476, 748, '#363a45', { rx: 2 });
  c.mid(437, 738, '5月 21 (木)', '#fff');
}

/* ---------- 15 seconds ---------- */
{
  const c = canvas('sec');
  const y = p => 780 + (7920 - p) * 2.249, X = v => Math.round(v / 2.2725), Y = v => Math.round(740 + v / 2.24);
  c.rect(58, 757, 178, 1012, '#2e1114');
  c.rect(177, 864, 619, 1050, '#111d2e');
  for (let p = 7920; p >= 7660; p -= 20) c.h(y(p), 58, 619, 'rgba(255,255,255,.05)');
  c.v(168, 757, 1371, '#5e501e', 1, '1 3');
  c.h(929, 58, 619, '#8b8d92', 2, '10 9');
  c.h(1012, 58, 619, '#fbc02d', 3, '3 6');
  c.rect(427, 832, 466, 1010, 'rgba(76,175,80,.2)');
  c.rect(427, 1010, 466, 1099, 'rgba(233,40,99,.2)');
  c.h(1010, 427, 466, '#8a8d96');
  c.rect(40, 1042, 505, 1058, 'rgba(255,152,0,.2)', { stroke: '#ff9800', transform: 'translate(.5 .5)' });
  c.rect(276, 1159, 497, 1164, 'rgba(255,152,0,.2)', { stroke: '#ff9800', transform: 'translate(.5 .5)' });
  c.h(1097, 58, 600, CROSS, 1, '5 6');
  const list = parse(`
r 403 28 608 693 995 1006;r 435 15 1021 1026 1119 1203;r 453 11 1073 1098 1326 1380;g 467 6 1168 1260 1326 1370;r 483 15 1170 1259 1407 1413;
r 503 10 1388 1393 1413 1413;g 519 10 1219 1268 1413 1413;r 535 11 1266 1275 1371 1413;g 551 11 1194 1248 1331 1363;g 564 6 1053 1062 1245 1254;
r 576 5 1037 1046 1075 1113;g 584 4 997 1046 1053 1073;r 590 3 992 1046 1053 1075;g 597 5 1043 1073 1075 1118;g 605 6 987 1057 1068 1077;g 614 6 981 981 1048 1053;
g 627 6 795 803 979 979;g 637 6 726 771 794 796;r 646 6 750 759 812 812;r 657 6 780 812 826 860;r 669 6 816 816 948 948;r 685 15 900 951 998 1006;
g 703 10 951 992 999 1017;g 721 10 843 936 999 999;g 737 5 851 856 938 981;g 746 3 826 831 866 870;r 753 6 815 824 968 968;g 760 6 836 839 943 957;
g 769 6 821 821 847 877;g 781 15 764 764 822 877;g 798 10 573 573 762 762;g 814 10 484 524 571 589;r 828 6 532 543 671 671;g 838 7 497 552 647 647;
r 844 6 543 549 600 618;g 851 6 540 549 600 611;r 858 6 549 549 611 627;r 865 5 597 600 611 647;g 871 6 591 609 620 658;r 880 6 584 594 647 652;
g 890 6 569 594 627 647;g 906 15 517 524 580 633;g 921 6 356 376 515 524;g 935 11 316 363 378 417;r 953 11 343 347 365 443;g 971 11 186 206 358 358;
r 987 11 211 215 325 347;r 1001 11 262 343 379 412;g 1019 11 267 267 379 379;r 1033 6 242 262 284 291;g 1044 10 190 222 284 296;r 1057 6 222 226 305 403;
g 1067 5 296 316 328 347;g 1072 5 296 311 325 354;r 1080 6 311 316 379 379;r 1092 6 365 367 379 423;g 1099 6 271 287 374 383;g 1105 5 231 267 287 287;
r 1112 4 231 267 271 327;g 1118 3 276 278 290 290`, 0, 740, 2.2725, 2.24);
  const early = parse(`
g 134 3 425 430 438 440;g 140 3 403 410 424 428;r 148 3 411 414 428 430;r 157 3 402 408 425 428;g 165 3 405 409 418 422;r 173 4 403 405 410 430;r 183 6 396 396 455 455;
g 190 3 425 427 444 448;r 197 3 425 429 437 440;g 204 3 408 412 430 436;g 209 3 396 402 415 420;g 216 4 373 379 398 400;r 222 3 390 395 408 412;g 228 3 398 402 415 418;
r 234 3 384 390 406 410;g 241 3 376 382 398 405;r 247 3 394 398 406 412;r 253 3 400 404 408 414;g 258 3 373 378 400 405;r 263 3 370 375 390 395;g 268 3 375 380 394 398;r 275 4 367 378 392 400;
g 284 3 385 388 400 403;r 290 4 388 392 406 408;g 296 3 386 392 404 420;r 301 6 388 393 417 445;g 312 4 397 406 420 425;r 318 3 405 410 422 428;r 324 3 413 420 430 438;g 331 4 408 424 428 437`,
    0, 740, 2.2725, 2.24);
  list.forEach((k, i) => {
    if (i) c.plus(k.x + .5, 1050, 3, '#c06d0c', 2);
    c.plus(k.x + .5, 1261, 3, '#b2b2b2', 2);
    c.plus(k.x + .5, 1304.5, i < 9 && i > 1 ? 3 : 1.5, '#12a5ba');
  });
  for (let x = 59; x < 147; x += 2.5) { c.plus(x, 1261, 3, '#b2b2b2', 2); c.plus(x, 1304.5, 1.5, '#12a5ba'); }
  c.plus(157, 1261, 3, '#b2b2b2', 2); c.plus(157.5, 1304.5, 1.5, '#12a5ba');
  c.h(1012, 149, 164, UP);
  candles(c, early);
  candles(c, list, 1371);
  [[935, 131, 5], [814, 424, 3], [737, 767, 1], [905, 807, 4]].forEach(([a, b, n]) => c.num(X(a) + .5, Y(b) + .5, n));
  c.arrow(338, 1198); c.num(343, 1203, 2);
  c.thumb(449, 803);
  c.path('M' + [[888, 1060], [952, 831], [1031, 990], [1044, 499], [1117, 683], [1161, 187]].map(([a, b]) => X(a) + ' ' + Y(b)).join('L') + 'M500 834L511 824L521 835', '#6f97cf', 2);
  c.v(552, 757, 1371, CROSS, 1, '5 6');
  c.text(611, 940, 'W top', '#fff', { 'text-anchor': 'end', 'font-weight': 900, 'font-size': 13 });
  c.path('M68 1341h13v17h-5v-11h-8zM88 1341h10l-7 17h-6z', 'none', 0, { fill: '#dbdbdb' });
  c.dot(84.5, 1344, 3, '#dbdbdb');
  c.earn(177, 1359);
  c.v(619, 757, 1397, '#8a8a8a');
  c.h(1371, 58, 677, '#8a8a8a');
  for (let p = 7920; p >= 7660; p -= 20) c.text(628, y(p) - 1, price(p));
  c.tag(620, 824, 663, 841, '#4caf50', 628, '7,897', '#fff');
  c.tag(620, 855, 663, 872, YEL, 628, '00:12', '#5c5416');
  c.tag(620, 1003, 663, 1021, '#fbc02d', 628, '7,817', '#000');
  c.rect(598, 1087, 663, 1108, '#363a45', { rx: 2 });
  c.v(619, 1087, 1108, '#8a8a8a');
  c.dot(608, 1097.5, 7.5, 'none', { stroke: '#fff' }); c.plus(608, 1097.5, 4, '#fff');
  c.text(628, 1097, '7,779', '#fff');
  c.rect(546, 1253, 674, 1270, '#fff', { rx: 2 });
  c.rect(559, 1296, 674, 1313, '#00bcd4', { rx: 2 });
  c.v(619, 1253, 1270, '#777'); c.v(619, 1296, 1313, '#777');
  c.text(615, 1261, 'week :w_op', '#000', { 'text-anchor': 'end' }); c.text(628, 1261, '7,706.0', '#000');
  c.text(615, 1304, 'week :HH', '#000', { 'text-anchor': 'end' }); c.text(628, 1304, '7,687.0', '#000');
  [[99, '15:20'], [177, '21'], [294, '09:05'], [391, '09:10'], [496, '09:15']].forEach(([x, s]) => c.mid(x, 1385, s));
  c.rect(485, 1372, 619, 1395, '#363a45');
  c.text(493, 1385, '5月 21 (木)', '#fff'); c.text(563, 1385, '09:20:15', '#fff');
  c.path('M646 1379h7l4 6.500-4 6.500h-7l-4-6.500z', '#dbdbdb'); c.dot(649.5, 1385.5, 2.5, 'none', { stroke: '#dbdbdb' });
}

/* ---------- 2 minutes ---------- */
{
  const c = canvas('min');
  const y = p => 106.4 + (8100 - p) * 2.0832;
  const d18 = parse(`
r 5 4 530 539 547 565;g 11 5 526 539 547 556;r 17 5 520 535 587 587;r 23 5 580 584 637 637;r 29 4 634 634 656 661;r 35 5 634 653 770 786;g 41 5 717 744 767 786;
r 47 5 739 739 815 815;g 54 4 791 812 815 817;r 59 5 808 812 834 841;g 65 5 732 777 829 829;r 72 5 767 770 779 779;g 77 5 746 763 779 786;g 84 5 703 744 755 755;
r 90 5 744 744 784 784;r 96 5 767 786 801 817;g 102 5 786 796 801 812;r 107 5 786 791 843 850;r 114 5 832 843 853 862;g 120 5 827 834 860 860;g 126 5 834 834 843 853;
r 132 5 841 846 860 867;r 138 5 862 865 874 886;r 144 5 846 865 888 888;g 150 5 867 886 893 896;g 156 5 846 846 898 898;g 162 5 846 846 855 872;r 168 5 841 846 865 881;
r 174 5 848 867 888 896;g 180 5 858 872 884 886;r 187 5 867 877 891 893;r 193 5 874 884 891 893;g 198 5 874 877 893 905;g 205 4 858 872 877 886;r 210 5 872 872 893 898;
r 216 5 886 886 898 910;g 223 5 867 867 903 905;g 229 5 832 836 865 881`, 680, 780, 1.823, 2.376);
  const d19 = parse(`
g 307 30 732 927 1053 1083;g 336 14 513 513 942 1002;g 358 18 264 321 537 633;r 377 14 159 321 381 402;r 391 10 333 369 486 513;g 403 6 339 396 462 462;
g 416 13 189 222 411 459;r 430 6 222 222 300 333;r 440 6 246 270 285 378;r 448 6 276 288 312 369;r 458 6 288 303 399 444;r 467 6 363 396 441 444;r 475 6 426 438 510 510;
r 483 6 501 501 522 564;g 489 6 396 402 516 516;r 495 6 402 414 441 501;g 503 6 390 396 435 453;g 508 6 369 381 417 426;g 514 6 369 369 408 426;g 522 6 270 282 372 372;
g 530 6 264 282 291 303;g 538 6 177 183 279 282;g 550 10 102 102 186 222;r 562 6 84 96 111 138;r 569 10 84 108 150 171;g 579 6 147 153 156 189;r 585 6 126 153 186 201;
r 593 6 165 195 237 252;r 599 6 222 246 279 315;r 607 6 276 276 393 459;r 613 5 309 384 417 426;g 618 6 303 333 405 414;g 626 6 228 240 336 369;g 632 6 201 201 255 303;
r 638 6 165 201 216 234;r 646 6 201 207 240 252;r 652 6 228 240 306 333;g 658 6 276 282 306 351;g 665 6 276 282 291 321;r 671 6 264 276 360 360;g 677 6 288 288 366 384;
g 685 6 264 297 300 333;g 691 5 270 294 300 309;g 697 6 228 270 291 291;r 705 6 264 264 330 345;g 710 6 252 252 336 363;r 716 6 228 252 279 288;r 724 6 258 270 312 333;
g 730 6 228 246 312 351;r 736 6 234 252 273 276;g 744 6 240 252 276 303;g 750 6 228 246 267 288;r 756 6 240 246 273 282;r 763 6 252 270 336 336;r 769 6 315 327 393 396;
g 775 6 282 297 393 402;r 781 6 297 297 306 333;g 789 6 261 264 300 309;g 795 6 246 252 273 285;r 801 6 258 258 300 351;r 809 6 297 297 354 363;r 814 6 345 351 366 390;
r 820 6 339 366 378 396;r 828 6 369 369 447 447;g 834 6 402 426 447 495;r 842 6 432 444 480 486;r 848 6 477 477 498 546;g 854 6 438 489 504 519;g 861 6 408 420 486 495;
r 867 6 384 414 441 441;g 873 6 378 378 435 435;g 881 6 339 339 372 384;r 887 6 297 339 360 369;g 893 5 339 351 354 378;g 901 6 327 327 348 348;g 916 18 132 228 291 339;
g 930 6 126 132 225 258;r 938 6 126 132 192 201;g 944 6 120 132 198 222;g 954 9 63 78 135 135;r 963 9 39 78 99 102;g 969 5 63 96 99 120;r 975 6 84 96 156 159;
r 983 6 159 165 225 225;g 989 6 171 186 210 222;r 995 6 153 177 204 222;g 1003 6 174 195 198 222;g 1008 6 165 165 198 228;r 1014 6 165 165 198 207;r 1022 6 183 195 204 228;
r 1028 6 201 201 261 270;r 1034 6 252 264 318 378;g 1040 6 246 252 318 321;r 1048 6 258 264 285 315;g 1054 6 213 246 291 297;r 1059 6 228 228 249 288;r 1067 6 246 246 273 288;
r 1073 6 264 264 330 333;g 1079 6 288 303 324 351;r 1087 6 294 303 372 390;g 1093 6 345 369 381 402;r 1099 6 369 369 399 438;r 1106 6 384 390 414 420;r 1112 6 402 414 447 477;
g 1118 6 432 438 447 483;g 1126 6 384 414 435 501;g 1132 6 396 396 423 453;g 1138 6 321 321 399 399;r 1146 6 309 321 354 354;r 1151 6 339 351 360 369;g 1157 6 303 303 342 363;
g 1165 6 276 288 291 309;g 1171 6 270 285 291 297;r 1177 6 246 282 312 321;r 1185 6 315 315 348 351;g 1191 6 321 333 354 369;r 1197 6 333 333 393 393;g 1204 6 333 351 393 393;
g 1210 6 327 339 348 357;g 1216 6 306 321 348 348;g 1224 6 246 252 336 336;r 1230 6 246 252 330 333;g 1236 6 258 264 327 327;r 1244 6 252 264 330 330;g 1250 6 264 264 318 330;
r 1256 6 282 288 306 315;r 1263 6 288 288 300 327;r 1269 6 288 288 318 327;r 1275 6 309 318 336 345;g 1283 6 288 303 336 357;r 1289 6 288 297 429 438;r 1295 6 420 432 447 465;
g 1302 6 369 369 447 477;g 1308 6 321 321 372 372;g 1314 6 282 309 324 333;g 1322 6 270 276 315 318;r 1328 6 264 276 324 339;r 1334 6 303 309 324 333;g 1342 6 222 228 285 285;
g 1348 6 201 222 231 240;r 1353 6 201 213 231 264;r 1361 6 222 228 279 282;g 1367 6 222 234 300 327;g 1373 6 207 228 237 264;r 1381 6 201 222 255 255;g 1387 6 207 222 255 258;
g 1393 6 189 189 216 222;r 1400 6 159 189 204 213;r 1406 6 201 207 372 378;r 1412 6 357 369 441 441;g 1420 6 369 402 435 453;g 1426 6 357 384 411 411;g 1432 6 345 363 387 414;
g 1440 6 339 351 372 387;r 1446 6 345 357 423 432;g 1451 6 339 345 417 426;g 1457 6 339 345 348 372;r 1465 6 327 345 372 372;g 1471 6 339 351 372 381;g 1477 6 288 288 354 357;
g 1485 6 258 270 300 300;g 1490 6 246 246 276 285;r 1496 6 222 246 279 315`, 680, 380, 1.96, 3);
  const d20 = parse(`
r 41 32 63 219 348 675;r 73 15 201 294 492 501;r 94 15 450 513 690 738;g 111 11 576 582 705 795;g 126 10 357 357 603 627;r 141 10 363 363 480 600;g 155 10 282 432 492 495;
g 172 15 132 156 435 468;g 193 15 45 87 165 258;r 215 14 81 87 105 258;r 232 10 102 102 210 252;g 247 10 150 189 204 258;r 263 15 177 189 267 339;r 285 14 258 270 534 576;
g 302 10 387 402 534 576;g 312 6 252 288 390 414;r 323 6 258 276 372 408;g 336 10 276 351 372 414;r 348 6 333 345 435 456;g 363 10 408 432 441 558;r 380 10 408 450 555 582;
r 399 15 543 543 705 726;r 418 10 657 687 717 807;g 431 6 519 594 711 726;r 442 6 570 594 621 681;r 450 6 588 606 615 657;g 457 6 438 456 621 645;g 465 6 351 351 459 468;
g 474 5 300 357 360 444;r 482 6 339 357 510 588;g 490 4 438 489 492 519;r 499 6 489 495 660 675;g 507 6 564 633 666 693;g 514 6 594 600 642 693;g 522 6 438 495 609 645;
r 529 6 408 489 514 570;r 537 6 468 519 555 645;r 545 6 531 543 684 687;r 552 6 669 687 792 837;r 560 6 762 783 798 837;r 567 6 732 783 792 819;r 573 6 789 789 852 876;
g 584 11 777 777 852 918;r 594 6 777 777 852 918;g 601 6 819 825 861 888;r 609 6 777 825 852 912;r 618 10 819 864 954 981;g 628 6 924 936 954 1056;r 635 6 918 918 960 978;
g 641 6 924 945 966 987;g 649 5 918 939 942 987;r 656 6 933 951 966 978;r 662 6 912 963 972 972;r 671 6 933 951 972 999;g 677 6 882 882 954 963;g 685 6 756 864 897 906;
g 694 6 750 768 867 870;g 700 6 726 726 759 789;g 707 6 663 714 729 729;g 714 6 627 645 717 726;r 721 6 618 633 771 771;r 728 6 756 777 804 819;g 736 6 762 795 798 807;
r 743 6 789 789 852 864;g 749 6 762 807 846 852;r 757 6 756 807 822 822;g 764 6 795 807 822 825;r 770 6 777 801 828 831;r 779 6 798 825 846 900;r 785 6 840 843 861 888;
r 792 6 819 858 942 975;g 800 6 819 825 936 939;r 806 6 777 819 903 906;r 813 6 870 888 966 993;r 821 6 945 957 996 1032;g 828 6 939 939 984 990;r 842 15 1032 1155 1398 1482;
g 859 11 1131 1137 1404 1404;r 870 6 1113 1125 1167 1206;g 876 6 1074 1101 1167 1239;g 885 6 1014 1014 1086 1125;r 891 6 969 1008 1092 1137;r 897 6 1038 1083 1116 1200;
g 906 6 1026 1050 1110 1110;g 912 9 1020 1020 1059 1083;r 919 6 1020 1020 1059 1074;g 927 6 1044 1056 1059 1107;g 934 6 1044 1044 1059 1083;g 940 6 999 999 1041 1068;
g 948 6 945 969 1011 1029;r 954 6 954 969 984 993;g 961 6 888 906 990 990;r 968 6 858 906 942 945;r 976 6 912 939 978 1014;g 982 6 921 936 978 993;g 990 6 912 912 948 960;
g 997 6 906 912 915 945;g 1003 6 882 900 909 942;g 1012 6 870 882 900 900;g 1018 6 813 825 885 885;r 1024 6 813 825 852 882;g 1033 6 837 849 852 879;g 1039 6 825 831 852 900;
r 1046 6 819 831 897 900;g 1054 6 876 888 897 900;g 1061 6 825 831 885 888;r 1067 6 831 831 891 906;r 1075 6 888 888 900 912;r 1082 6 882 897 942 954;g 1088 6 912 912 954 975;
g 1096 6 900 900 915 936;r 1103 6 906 906 954 957;g 1109 6 933 945 960 960;r 1118 6 930 945 954 957;r 1124 6 939 939 954 960;g 1131 6 933 939 948 999;r 1137 6 945 945 1020 1020;
r 1145 6 1014 1014 1059 1095;g 1152 6 1038 1038 1065 1101;g 1158 6 999 1014 1035 1038;r 1166 6 1011 1014 1023 1026;g 1173 6 912 918 1023 1026;r 1179 6 906 918 978 984;
r 1188 6 966 981 1002 1014;r 1194 6 987 999 1059 1068;g 1202 5 1044 1056 1059 1068;g 1209 5 1050 1056 1059 1083;r 1215 6 1044 1050 1068 1083;r 1222 6 1056 1068 1098 1098;
r 1230 6 1089 1089 1167 1182;g 1236 6 1131 1143 1158 1167;r 1243 6 1137 1137 1440 1455;g 1251 6 1320 1356 1440 1470;r 1257 6 1350 1362 1434 1434;r 1264 6 1416 1437 1446 1476;
g 1272 6 1374 1401 1446 1482;r 1279 6 1356 1407 1416 1437;g 1285 6 1281 1299 1383 1383;g 1293 6 1188 1206 1302 1314;r 1300 6 1191 1200 1227 1245;r 1306 6 1212 1224 1251 1281;
r 1315 6 1245 1251 1353 1380;r 1321 6 1338 1350 1377 1395;g 1328 5 1362 1374 1377 1395;r 1336 6 1374 1374 1434 1437;r 1342 6 1413 1422 1440 1455;g 1349 6 1413 1413 1434 1455;
g 1357 6 1380 1401 1413 1428;g 1363 6 1305 1314 1404 1404;r 1370 6 1299 1314 1341 1344;r 1378 6 1275 1332 1359 1374;g 1385 6 1317 1332 1365 1368;g 1391 6 1287 1314 1335 1335;
g 1399 6 1149 1155 1302 1305;r 1406 6 1149 1155 1203 1203;r 1412 6 1188 1194 1221 1224;r 1421 6 1170 1218 1242 1245;r 1427 6 1212 1224 1233 1245;g 1434 6 1200 1206 1227 1230;
g 1442 6 1164 1170 1203 1212;g 1448 5 1131 1164 1167 1230;g 1455 6 1131 1155 1167 1182;r 1463 6 1125 1143 1179 1218;g 1470 6 1155 1176 1179 1212`, 1460, 220, 2.119, 3);
  const d21 = parse(`
r 145 45 594 683 1391 1616;g 187 21 984 984 1351 1383;g 223 27 716 936 981 1022;g 259 27 463 506 938 984;r 289 15 478 526 635 658;
g 322 33 152 352 612 632;g 358 22 157 352 354 400;g 379 9 200 248 349 357`, 2140, 460, 3, 2.529);

  /* session ranges */
  c.rect(681, 795, 837, 1163, '#0d0304'); c.rect(681, 926, 837, 1092, '#22080b');
  c.rect(836, 393, 1480, 741, '#02050b'); c.rect(836, 420, 1480, 731, '#060e20');
  c.rect(1479, 235, 2189, 714, '#0d0304'); c.rect(1479, 293, 2189, 695, '#22080b');
  c.rect(2189, 520, 2447, 1099, '#02050c'); c.rect(2189, 558, 2447, 730, '#060e20');
  for (let p = 8100; p >= 7500; p -= 20) c.h(y(p), 681, 2447, 'rgba(255,255,255,.055)');
  [827, 1469, 2177].forEach(x => c.v(x, 80, 1371, '#1a1440', 1, '1 3'));

  /* volume */
  const BL = '#0d2158', GR = '#24303d';
  const seen = [];
  const bar = (x, w, top, col) => { c.rect(Math.round(x - w / 2), Math.round(top), Math.round(x + w / 2), 1371, col); seen.push([x, w]); };
  [[248, 32, 1005, 0], [285, 32, 1102, 0], [311, 16, 1328, 0], [331, 16, 1316, 0], [350, 13, 1349, 1], [364, 7, 1366, 1], [375, 5, 1373, 0], [388, 13, 1349, 0], [400, 8, 1376, 1], [412, 8, 1378, 1], [424, 8, 1371, 1], [435, 6, 1374, 1], [487, 6, 1378, 0], [500, 6, 1373, 0], [512, 10, 1359, 0], [530, 7, 1368, 1], [850, 17, 1302, 0], [885, 9, 1368, 0], [1418, 42, 637, 0], [1458, 33, 1017, 1]]
    .forEach(([x, w, t, g]) => bar(680 + x / 1.823, w / 1.823, 780 + t / 2.376, g ? GR : BL));
  [[128, 11, 1020, 1], [140, 10, 1041, 1], [153, 8, 1059, 0], [161, 6, 1062, 0], [171, 8, 1059, 0], [180, 6, 1059, 0], [191, 8, 1038, 0], [205, 11, 1017, 0], [218, 8, 1038, 1], [229, 6, 1059, 1], [239, 6, 1065, 0], [251, 11, 1029, 1], [262, 10, 1035, 1], [273, 5, 1071, 0], [286, 4, 1071, 1], [296, 6, 1062, 0], [313, 10, 1050, 0], [324, 8, 1059, 0], [336, 11, 1020, 1], [453, 6, 1065, 0], [476, 5, 1071, 1], [617, 11, 1020, 1], [630, 5, 1068, 0], [1036, 28, 312, 1], [1064, 24, 609, 1], [1085, 10, 1032, 0], [1099, 14, 975, 0], [1117, 13, 1002, 0], [1130, 8, 1050, 1], [1145, 15, 951, 0], [1160, 12, 1017, 0], [1171, 8, 1100, 0]]
    .forEach(([x, w, t, g]) => bar(1400 + x / 1.352, w / 1.352, 1000 + t / 3, g ? GR : BL));
  const taken = seen.slice();
  [...d18, ...d19, ...d20].forEach((k, i) => {
    if (taken.some(([x, w]) => Math.abs(x - k.x) < w / 2 + 1)) return;
    const hgt = 4 + (i * 37 % 11) * (i % 5 === 0 ? .9 : .5);
    c.rect(k.x - 1, Math.round(1371 - hgt), k.x + 1, 1371, i * 7 % 3 ? BL : GR);
  });
  const ma = [[2, 1394], [90, 1393], [130, 1396], [228, 1390], [250, 1359], [287, 1335], [330, 1323], [380, 1314], [426, 1308], [440, 1359], [460, 1376], [480, 1382], [585, 1380], [620, 1388], [760, 1393], [780, 1389], [840, 1390], [855, 1383], [930, 1378], [940, 1388], [1395, 1389], [1415, 1328], [1458, 1295]]
    .map(([a, b]) => [680 + a / 1.823, 780 + b / 2.376])
    .concat([[160, 963], [229, 936], [240, 1020], [250, 1047], [340, 1056], [360, 1056], [415, 1083], [500, 1088], [540, 1095], [600, 1094], [620, 1088], [660, 1082], [690, 1095], [770, 1101], [900, 1096], [1018, 1100], [1036, 1026], [1064, 990], [1085, 984], [1130, 962], [1145, 948], [1171, 942]]
      .map(([a, b]) => [1400 + a / 1.352, 1000 + b / 3]));
  c.path('M' + ma.map(p => p.join(' ')).join('L'), '#4f481c', 1, { 'stroke-dasharray': '1 1' });

  /* weekly levels */
  const xs = [...d18, ...d19, ...d20].map(k => k.x).concat([817, 1457, 2166], d21.slice(2).map(k => k.x));
  xs.forEach(x => { c.dot(x + .5, 926.5, 2.7, '#b0b0b0'); c.dot(x + .5, 966.5, 2.7, '#0d7f90'); });

  /* levels */
  const OL = '#a39a45';
  c.h(416, 827, 1469, OL, 1, '5 6'); c.h(701, 1469, 2177, OL, 1, '5 6'); c.h(793, 2177, 2267, OL, 1, '5 6');
  c.h(495, 1141, 1254, '#a8a03a'); c.h(547, 1852, 1963, '#a8a03a');
  const RD = '#9c2a35';
  c.h(476, 1152, 1353, RD); c.mid(1353, 471, '1230', RD, { 'font-size': 10 });
  c.h(605, 1861, 2063, RD); c.mid(2064, 600, '1230', RD, { 'font-size': 10 });
  c.h(1014, 681, 715, RD); c.mid(716, 1008, '1230', RD, { 'font-size': 10 });
  c.h(293, 1479, 2190, '#c07c2c', 2); c.mid(2188, 289, 'OP', '#a96f25', { 'font-size': 9 });
  c.h(926, 681, 836, '#e09a45', 2); c.mid(836, 922, 'OP', '#a96f25', { 'font-size': 9 });
  c.h(420, 1457, 2166, '#1aa6ba', 2); c.mid(2166, 415, '1530', '#1aa6ba', { 'font-size': 10 });
  c.h(1091, 817, 1457, '#00bcd4', 2); c.mid(1458, 1086, '1530', '#00bcd4', { 'font-size': 10 });
  c.h(1091, 810, 826, UP); c.h(420, 1448, 1467, UP); c.h(695, 2160, 2176, UP);
  c.h(695, 2166, 2447, '#00acc6', 2);
  c.h(730, 2189, 2447, '#b07b2e', 2);
  c.h(618, 681, 2447, '#74777c', 2, '10 12');
  c.rect(2247, 528, 2260, 694, 'rgba(76,175,80,.2)');
  c.rect(2247, 694, 2260, 777, 'rgba(233,40,99,.2)');
  c.rect(792, 723, 2269, 738, 'rgba(255,152,0,.2)', { stroke: '#ff9800', transform: 'translate(.5 .5)' });
  c.rect(2219, 831, 2266, 836, 'rgba(255,152,0,.2)', { stroke: '#ff9800', transform: 'translate(.5 .5)' });
  c.h(774, 681, 2447, CROSS, 1, '5 6');

  /* session average */
  const vw = (list, pts, ox, oy, kx, ky, sparse) => {
    const P = pts.map(([a, b]) => [ox + a / kx, oy + b / ky]);
    const put = (x, yy) => c.plus(Math.floor(x) + .5, Math.floor(yy) + .5, 1.5, '#3358e6');
    if (sparse) return P.forEach(p => put(...p));
    list.forEach(k => {
      const i = P.findIndex(p => p[0] >= k.x - 1);
      if (i < 0) return;
      const a = P[Math.max(0, i - 1)], b = P[i];
      put(k.x, b[0] === a[0] ? b[1] : a[1] + (b[1] - a[1]) * Math.min(1, (k.x - a[0]) / (b[0] - a[0])));
    });
  };
  vw(d18, [[5, 457], [23, 458], [35, 462], [65, 469], [102, 472], [132, 476], [162, 484], [193, 489], [229, 503]], 680, 780, 1.823, 2.376);
  vw(0, [[250, 538]], 680, 780, 1.823, 2.376, 1);
  vw(d19.slice(2), [[358, 781], [377, 737], [391, 718], [403, 700], [416, 667], [430, 652], [440, 637], [448, 628], [458, 619], [467, 610], [483, 607], [503, 598], [514, 592], [522, 583], [530, 579], [538, 571], [550, 550], [562, 541], [569, 528], [585, 516], [599, 507], [618, 501], [646, 490], [677, 484], [710, 475], [736, 468], [775, 462], [814, 457], [881, 457], [901, 454], [916, 442], [938, 436], [954, 427], [975, 418], [1022, 409], [1054, 403], [1138, 403], [1224, 398], [1314, 394], [1342, 393], [1400, 385], [1490, 384], [1496, 382]], 680, 380, 1.96, 3);
  vw(0, [[307, 916], [1524, 325]], 680, 380, 1.96, 3, 1);
  vw(0, [[41, 361], [94, 397], [111, 415], [155, 421], [193, 382], [215, 367], [232, 358], [247, 352], [263, 346], [302, 355], [1496, 826]], 1460, 220, 2.119, 3, 1);
  vw(d20.slice(19), [[363, 361], [380, 364], [399, 379], [418, 391], [442, 400], [499, 405], [545, 418], [573, 430], [601, 444], [635, 465], [671, 473], [694, 485], [750, 492], [785, 499], [828, 514], [842, 541], [859, 550], [885, 562], [906, 573], [948, 586], [1003, 595], [1067, 604], [1131, 612], [1173, 624], [1222, 630], [1264, 652], [1293, 660], [1370, 681], [1421, 694], [1470, 707]], 1460, 220, 2.119, 3);

  c.num(2226.5, 760, 1);
  [d18, d19, d20, d21].forEach(d => candles(c, d));
  vw(0, [[223, 1134], [289, 1038], [322, 937], [358, 883], [379, 871]], 2140, 460, 3, 2.529, 1);
  c.h(695, 681, 2447, '#fbc02d', 3, '3 6');

  /* drawings */
  c.path('M2246 881V786L2258 852L2259 650L2266 726L2269 521M2259 531L2269 521L2280 531', '#6f97cf', 2);
  c.path('M2241 533l6-3 5 3', '#777', 1, { 'stroke-dasharray': '3 3' });
  c.thumb(2260, 502);
  c.num(2247.5, 496.5, 5); c.num(2226.5, 617.5, 3); c.num(2247.5, 778.5, 4);
  c.arrow(2226.5, 868); c.num(2226.5, 873.5, 2);
  c.v(2277, 80, 1371, CROSS, 1, '5 6');
  c.earn(2167, 1359);
  c.dot(2266, 1358, 9.5, '#12061a', { stroke: '#8e3bb0', 'stroke-width': 2 });
  c.path('M2268 1352l-5 7h6l-5 6', '#b24bd8', 2);
  c.dot(2273, 1352, 3, DOWN);
  c.text(2439, 629, 'W top', '#fff', { 'text-anchor': 'end', 'font-weight': 900, 'font-size': 13 });
  c.rect(2346, 90, 2398, 109, '#17181b'); c.rect(2399, 90, 2437, 109, '#8f3030');
  c.mid(2372, 99, 'Daily Gap', '#fff', { 'font-weight': 700, 'font-size': 10 });
  c.mid(2418, 99, '-0.22%', '#fff', { 'font-weight': 700, 'font-size': 10 });

  /* axes */
  c.v(2447, 80, 1398, '#8a8a8a');
  c.h(1371, 681, 2511, '#8a8a8a');
  for (let p = 8100; p >= 7500; p -= 20) if (p !== 7520) c.text(2456, y(p) - 1, price(p));
  c.h(685, 2448, 2490, '#8a8a8a');
  c.tag(2448, 520, 2491, 537, '#4caf50', 2456, '7,897', '#fff');
  c.tag(2413, 550, 2447, 567, YEL, 2417, '8766', '#000');
  c.rect(2448, 550, 2498, 595, YEL, { rx: 2 });
  c.text(2456, 558, '7,883', '#000'); c.text(2456, 572, '+2.82%', '#000'); c.text(2456, 586, '01:12', '#5c5416');
  c.tag(2448, 686, 2491, 704, '#fbc02d', 2456, '7,817', '#000');
  c.tag(2448, 764, 2491, 785, '#363a45', 2456, '7,779', '#fff');
  const duo = (x, y1, x2, bg, fg, a, b) => {
    c.rect(x, y1, x2, y1 + 17, bg, { rx: 2 });
    c.v(2447, y1, y1 + 17, '#777');
    c.text(2443, y1 + 8, a, fg, { 'text-anchor': 'end' }); c.text(2456, y1 + 8, b, fg);
  };
  duo(2406, 796, 2491, '#2962ff', '#fff', 'VWAP', '7,764');
  duo(2374, 918, 2491, '#fff', '#000', 'week :w_op', '7,706');
  duo(2387, 958, 2491, '#00bcd4', '#000', 'week :HH', '7,687');
  duo(2380, 1306, 2506, YEL, '#000', 'Volume MA', '275.22\u2009K');
  duo(2399, 1354, 2494, '#2962ff', '#fff', 'Volume', '38.1\u2009K');
  [[716, '14:30'], [765, '15:00'], [837, '19'], [929, '09:30'], [989, '10:00'], [1039, '10:30'], [1089, '11:00'], [1147, '12:30'], [1204, '13:00'], [1254, '13:30'], [1304, '14:00'], [1354, '14:30'], [1404, '15:00'], [1479, '20'], [1606, '09:30'], [1691, '10:00'], [1747, '10:30'], [1800, '11:00'], [1856, '12:30'], [1913, '13:00'], [1964, '13:30'], [2013, '14:00'], [2063, '14:30'], [2113, '15:00'], [2187, '21'], [2356, '10:00'], [2415, '10:30']]
    .forEach(([x, s]) => c.mid(x, 1385, s));
  c.rect(2219, 1372, 2336, 1395, '#363a45');
  c.text(2227, 1385, '5月 21 (木)', '#fff'); c.text(2297, 1385, '09:20', '#fff');
}
```
